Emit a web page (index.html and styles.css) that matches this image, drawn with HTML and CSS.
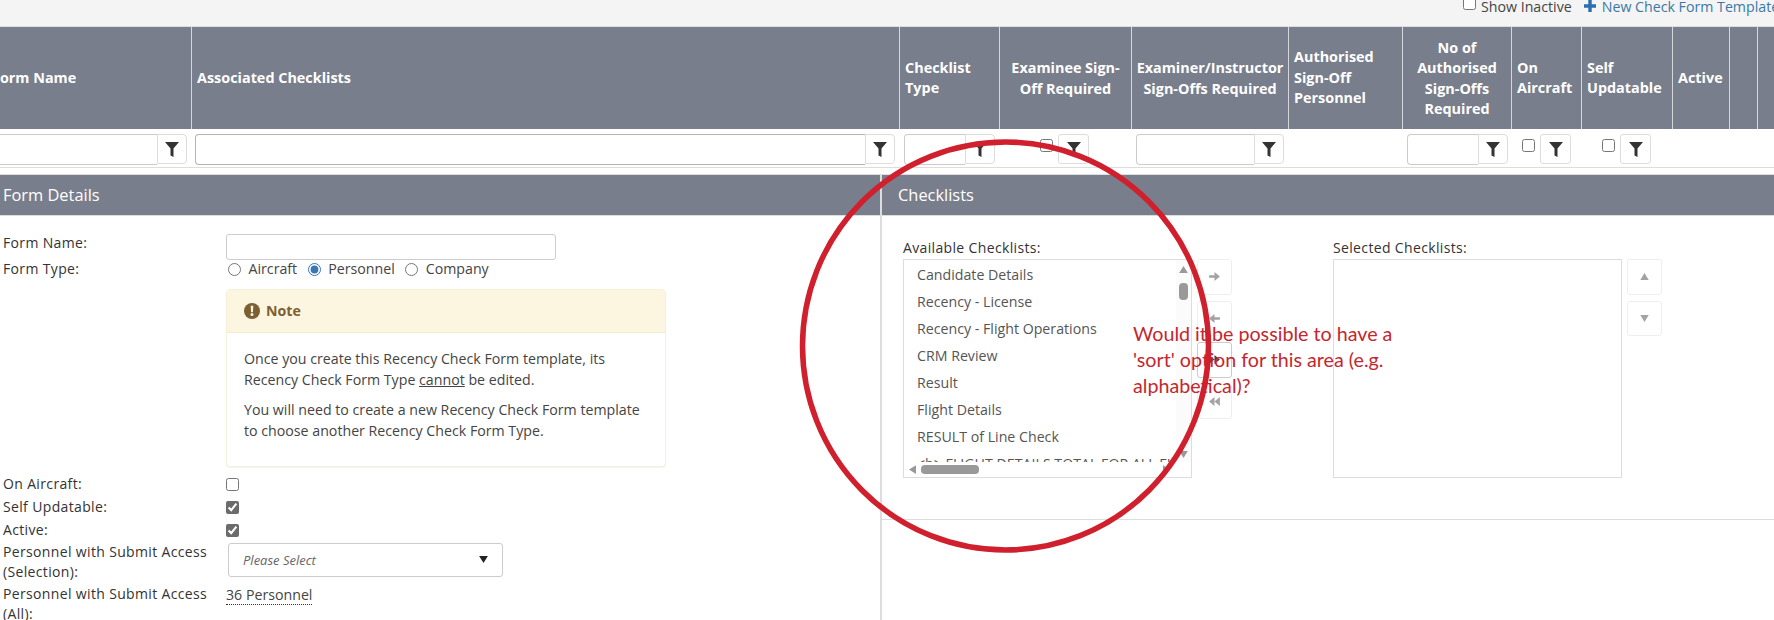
FILE: index.html
```html
<!DOCTYPE html>
<html lang="en">
<head>
<meta charset="utf-8">
<title>Check Form Templates</title>
<link rel="stylesheet" href="styles.css">
</head>
<body>
<div class="page">
  <div class="toolbar">
    <div class="toolbar-actions">
      <label class="show-inactive"><input type="checkbox" class="cb">Show Inactive</label>
      <a class="new-link" href="#"><svg class="plus" viewBox="0 0 12 12"><path d="M4.3 0h3.4v4.3H12v3.4H7.700V12H4.300V7.700H0V4.300h4.300z"/></svg>New Check Form Template</a>
    </div>
  </div>

  <div class="grid-row head-row">
    <div class="th th-first">Form Name</div>
    <div class="th">Associated Checklists</div>
    <div class="th">Checklist<br>Type</div>
    <div class="th th-c">Examinee Sign-<br>Off Required</div>
    <div class="th th-c">Examiner/Instructor<br>Sign-Offs Required</div>
    <div class="th">Authorised<br>Sign-Off<br>Personnel</div>
    <div class="th th-c">No of<br>Authorised<br>Sign-Offs<br>Required</div>
    <div class="th">On<br>Aircraft</div>
    <div class="th">Self<br>Updatable</div>
    <div class="th">Active</div>
    <div class="th"></div>
    <div class="th"></div>
  </div>

  <div class="grid-row filter-row">
    <div class="fc fc-first"><input class="fi" type="text"><button class="fb"><svg class="funnel" viewBox="0 0 14 15"><path d="M0 0h14L8.500 6.500V15l-3-1.500V6.500z"/></svg></button></div>
    <div class="fc fc-wide"><input class="fi fi-dark" type="text"><button class="fb"><svg class="funnel" viewBox="0 0 14 15"><path d="M0 0h14L8.500 6.500V15l-3-1.500V6.500z"/></svg></button></div>
    <div class="fc fc-type"><input class="fi" type="text"><button class="fb"><svg class="funnel" viewBox="0 0 14 15"><path d="M0 0h14L8.500 6.500V15l-3-1.500V6.500z"/></svg></button></div>
    <div class="fc fc-examinee"><input class="cb fcb" type="checkbox"><button class="fb fb-solo"><svg class="funnel" viewBox="0 0 14 15"><path d="M0 0h14L8.500 6.500V15l-3-1.500V6.500z"/></svg></button></div>
    <div class="fc fc-examiner"><input class="fi" type="text"><button class="fb"><svg class="funnel" viewBox="0 0 14 15"><path d="M0 0h14L8.500 6.500V15l-3-1.500V6.500z"/></svg></button></div>
    <div class="fc"></div>
    <div class="fc fc-number"><input class="fi" type="text"><button class="fb"><svg class="funnel" viewBox="0 0 14 15"><path d="M0 0h14L8.500 6.500V15l-3-1.500V6.500z"/></svg></button></div>
    <div class="fc fc-aircraft"><input class="cb fcb" type="checkbox"><button class="fb fb-solo"><svg class="funnel" viewBox="0 0 14 15"><path d="M0 0h14L8.500 6.500V15l-3-1.500V6.500z"/></svg></button></div>
    <div class="fc fc-self"><input class="cb fcb" type="checkbox"><button class="fb fb-solo"><svg class="funnel" viewBox="0 0 14 15"><path d="M0 0h14L8.500 6.500V15l-3-1.500V6.500z"/></svg></button></div>
    <div class="fc"></div>
    <div class="fc"></div>
    <div class="fc"></div>
  </div>

  <div class="split">
    <section class="panel panel-left">
      <h2 class="panel-title">Form Details</h2>
      <div class="form">
        <div class="row row-name"><span class="lbl">Form Name:</span><input class="text-input" type="text"></div>
        <div class="row row-type"><span class="lbl">Form Type:</span>
          <div class="radios">
            <label class="radio"><input type="radio" name="type">Aircraft</label>
            <label class="radio"><input type="radio" name="type" checked>Personnel</label>
            <label class="radio"><input type="radio" name="type">Company</label>
          </div>
        </div>
        <div class="note">
          <div class="note-head">
            <svg class="note-icon" viewBox="0 0 16 16"><circle cx="8" cy="8" r="8" fill="#7d6032"/><path d="M6.700 2.800h2.600l-.4 6.400H7.100z" fill="#fcf6e0"/><circle cx="8" cy="11.600" r="1.500" fill="#fcf6e0"/></svg>
            <span>Note</span>
          </div>
          <div class="note-body">
            <p>Once you create this Recency Check Form template, its<br>Recency Check Form Type <u>cannot</u> be edited.</p>
            <p>You will need to create a new Recency Check Form template<br>to choose another Recency Check Form Type.</p>
          </div>
        </div>
        <div class="row row-check row-first-check"><span class="lbl">On Aircraft:</span><input class="cb" type="checkbox"></div>
        <div class="row row-check"><span class="lbl">Self Updatable:</span><input class="cb" type="checkbox" checked></div>
        <div class="row row-check"><span class="lbl">Active:</span><input class="cb" type="checkbox" checked></div>
        <div class="row row-select"><span class="lbl lbl-wrap">Personnel with Submit Access (Selection):</span>
          <div class="select"><span>Please Select</span><svg class="caret" viewBox="0 0 10 8"><path d="M0 0h10L5 8z"/></svg></div>
        </div>
        <div class="row row-all"><span class="lbl lbl-wrap">Personnel with Submit Access (All):</span><span class="count">36 Personnel</span></div>
      </div>
    </section>

    <section class="panel panel-right">
      <h2 class="panel-title">Checklists</h2>
      <div class="pick">
        <div class="pick-col">
          <div class="pick-label">Available Checklists:</div>
          <div class="pick-body">
            <div class="listbox">
              <div class="list-main">
                <ul class="items">
                  <li>Candidate Details</li>
                  <li>Recency - License</li>
                  <li>Recency - Flight Operations</li>
                  <li>CRM Review</li>
                  <li>Result</li>
                  <li>Flight Details</li>
                  <li>RESULT of Line Check</li>
                  <li>&lt;b&gt; FLIGHT DETAILS TOTAL FOR ALL FLIGHTS</li>
                </ul>
                <div class="vbar">
                  <svg class="sb-arrow" viewBox="0 0 10 8"><path d="M5 0l5 8H0z"/></svg>
                  <div class="vthumb"></div>
                  <svg class="sb-arrow sb-end" viewBox="0 0 10 8"><path d="M0 0h10L5 8z"/></svg>
                </div>
              </div>
              <div class="hbar">
                <svg class="sb-arrow-h" viewBox="0 0 8 10"><path d="M8 0v10L0 5z"/></svg>
                <div class="hthumb"></div>
                <svg class="sb-arrow-h sb-end-h" viewBox="0 0 8 10"><path d="M0 0l8 5-8 5z"/></svg>
              </div>
            </div>
            <div class="btns">
              <button class="mv"><svg viewBox="0 0 12 10"><path d="M0 3.500h6V0l6 5-6 5V6.500H0z"/></svg></button>
              <button class="mv"><svg viewBox="0 0 12 10"><path d="M12 3.500H6V0L0 5l6 5V6.500h6z"/></svg></button>
              <button class="mv mv-dark"><svg viewBox="0 0 12 10"><path d="M0 0l6 5-6 5zM6 0l6 5-6 5z"/></svg></button>
              <button class="mv"><svg viewBox="0 0 12 10"><path d="M6 0v10L0 5zM12 0v10L6 5z"/></svg></button>
            </div>
          </div>
        </div>
        <div class="pick-col pick-col-sel">
          <div class="pick-label">Selected Checklists:</div>
          <div class="pick-body">
            <div class="listbox"></div>
            <div class="btns">
              <button class="mv mv-tri"><svg viewBox="0 0 12 10"><path d="M6 0l6 10H0z"/></svg></button>
              <button class="mv mv-tri"><svg viewBox="0 0 12 10"><path d="M0 0h12L6 10z"/></svg></button>
            </div>
          </div>
        </div>
      </div>
    </section>
  </div>

  <div class="callout">
    <svg class="ring" viewBox="0 0 420 422"><ellipse cx="209.500" cy="211" rx="203" ry="204"/></svg>
    <p class="callout-text">Would it be possible to have a<br>'sort' option for this area (e.g.<br>alphabetical)?</p>
  </div>
</div>
</body>
</html>
```

FILE: styles.css
```css
* { box-sizing: border-box; }
html, body { margin: 0; padding: 0; background: #fff; }
body { font-family: "Open Sans", "Liberation Sans", sans-serif; font-size: 14.200px; color: #333; }
.page { position: relative; width: 1774px; height: 620px; overflow: hidden; }

.toolbar { display: flex; height: 27px; background: #f4f4f4; border-bottom: 1px solid #ddd; }
.toolbar-actions { margin-left: auto; flex: none; width: 311px; display: flex; align-items: flex-start; white-space: nowrap; line-height: 14px; }
.show-inactive { display: flex; align-items: flex-start; color: #444; }
.show-inactive .cb { margin: -3px 5px 0 0; }
.new-link { display: flex; align-items: flex-start; margin-left: 12px; color: #3b78a8; text-decoration: none; }
.plus { width: 12px; height: 12px; fill: #2a6db0; margin: 0 6px 0 0; }

.grid-row { display: grid; grid-template-columns: 231px 708px 100px 132px 157px 114px 109px 70px 91px 57px 28px 40px; margin-left: -40px; }
.head-row { height: 102px; background: #797e8d; }
.th { display: flex; align-items: center; padding: 0 5px; color: #fff; font-weight: 700; font-size: 14.400px; line-height: 20.500px; border-left: 1px solid #d5d7dc; }
.th-first { padding-left: 32px; border-left: 0; }
.th-c { justify-content: center; text-align: center; padding: 1px 2px 0; }

.filter-row { height: 39px; border-bottom: 1px solid #ddd; }
.fc { display: flex; align-items: flex-start; padding-top: 5px; }
.fc-first { padding-right: 4px; }
.fc-wide { padding-left: 4px; padding-right: 4px; }
.fc-type { padding-left: 5px; padding-right: 4px; }
.fc-examinee { padding-left: 41px; }
.fc-examiner { padding-left: 5px; padding-right: 4px; }
.fc-number { padding-left: 5px; padding-right: 3px; }
.fc-aircraft { padding-left: 11px; }
.fc-self { padding-left: 21px; }
.fi { flex: 1; min-width: 0; height: 31px; padding: 0 6px; border: 1px solid #ccc; border-right: 0; border-radius: 4px 0 0 4px; background: #fff; }
.fi-dark { border-color: #b4b4b4; }
.fb { flex: none; width: 30px; height: 30px; padding: 0; display: flex; align-items: center; justify-content: center; background: #fff; border: 1px solid #ddd; border-radius: 0 4px 4px 0; }
.fb-solo { width: 31px; border-radius: 3px; }
.funnel { width: 14px; height: 15px; fill: #333; }
.cb { width: 13px; height: 13px; margin: 0; accent-color: #6b6b6b; flex: none; }
.fcb { margin: 5px 5px 0 0; }

.split { display: flex; margin-top: 6px; height: 446px; }
.panel { flex: none; }
.panel-left { width: 880px; }
.panel-right { flex: 1; border-left: 2px solid #ddd; }
.panel-title { margin: 0; height: 42px; padding-bottom: 1px; display: flex; align-items: center; background: #797e8d; border-top: 1px solid #ddd; border-bottom: 1px solid #ddd; color: #fff; font-size: 16.400px; font-weight: 400; }
.panel-left .panel-title { padding-left: 3px; }
.panel-right .panel-title { padding-left: 16px; }

.form { padding: 18px 0 0 3px; line-height: 20px; }
.row { display: flex; align-items: flex-start; }
.lbl { flex: none; width: 223px; font-size: 14px; letter-spacing: .35px; margin-top: -1px; }
.lbl-wrap { width: 223px; padding-right: 5px; }
.row-name { height: 26px; }
.text-input { width: 330px; height: 26px; border: 1px solid #ccc; border-radius: 3px; background: #fff; }
.row-type { height: 20px; }
.radios { display: flex; margin: -1px 0 0 2px; color: #444; }
.radio { display: flex; align-items: center; }
.radio input { margin: 0 7.500px 0 0; width: 13px; height: 13px; accent-color: #3b77b0; }
.radio + .radio { margin-left: 10.500px; }

.note { width: 440px; height: 178px; margin: 9px 0 6px 223px; border: 1px solid #f6f0da; border-radius: 4px; background: #fff; box-shadow: 0 1px 1px rgba(0,0,0,.05); }
.note-head { height: 43px; display: flex; align-items: center; padding-left: 17px; background: #fcf6e0; border-bottom: 1px solid #f3ecd0; color: #7d6032; font-weight: 700; }
.note-icon { width: 16px; height: 16px; margin-right: 6px; }
.note-body { padding: 15px 17px 0; color: #444; line-height: 21px; }
.note-body p { margin: 0 0 9px; }

.row-check { height: 23px; align-items: center; }
.row-select { height: 42px; margin-top: 1px; }
.select { width: 275px; height: 34px; margin-left: 2px; display: flex; align-items: center; justify-content: space-between; padding: 0 14px; border: 1px solid #ccc; border-radius: 3px; color: #666; font-size: 13px; font-style: italic; }
.caret { width: 9px; height: 7px; fill: #222; margin-top: -2px; }
.count { border-bottom: 1px dotted #333; height: 20px; line-height: 19px; color: #444; }

.pick { display: flex; height: 304px; padding: 22px 0 0 21px; border-bottom: 1px solid #ddd; }
.pick-col { width: 430px; }
.pick-label { height: 21px; line-height: 19px; font-size: 14px; letter-spacing: .35px; }
.pick-body { display: flex; }
.listbox { width: 289px; height: 219px; border: 1px solid #ddd; display: flex; flex-direction: column; background: #fff; }
.list-main { flex: 1; min-height: 0; display: flex; }
.items { flex: 1; min-width: 0; margin: 0; padding: 1px 0 0 13px; list-style: none; overflow: hidden; color: #555; white-space: nowrap; }
.items li { height: 27px; line-height: 27px; }
.vbar { flex: none; width: 15px; display: flex; flex-direction: column; align-items: center; padding-top: 6px; background: #fbfbfb; }
.sb-arrow { width: 9px; height: 7px; fill: #999; flex: none; }
.sb-end { margin-top: auto; margin-bottom: 4px; }
.vthumb { width: 9px; height: 17px; margin-top: 10px; border-radius: 4px; background: #999; }
.hbar { flex: none; height: 15px; display: flex; align-items: center; padding: 0 21px 0 5px; background: #fff; }
.sb-arrow-h { width: 7px; height: 9px; fill: #999; flex: none; }
.sb-end-h { margin-left: auto; }
.hthumb { width: 58px; height: 9px; margin-left: 5px; border-radius: 4px; background: #999; }
.btns { display: flex; flex-direction: column; gap: 6px; margin-left: 5px; }
.mv { width: 35px; height: 35.500px; padding: 0; display: flex; align-items: center; justify-content: center; background: #fff; border: 1px solid #eee; border-radius: 3px; }
.mv svg { width: 11px; height: 9px; fill: #a3a3a3; }
.mv-tri svg { width: 9px; height: 7px; }
.mv-dark { border-color: #ccc; }
.mv-dark svg { fill: #444; }
.pick-col-sel { width: 340px; }

.callout { position: absolute; left: 796px; top: 135px; width: 420px; height: 422px; pointer-events: none; }
.ring { position: absolute; inset: 0; width: 420px; height: 422px; z-index: 2; }
.ring ellipse { fill: none; stroke: #d0202e; stroke-width: 5.500; }
.callout-text { position: absolute; left: 337px; top: 186px; margin: 0; white-space: nowrap; font-family: Lato, "Liberation Sans", sans-serif; font-size: 19.700px; line-height: 26px; color: #c4262e; z-index: 1; }
```
